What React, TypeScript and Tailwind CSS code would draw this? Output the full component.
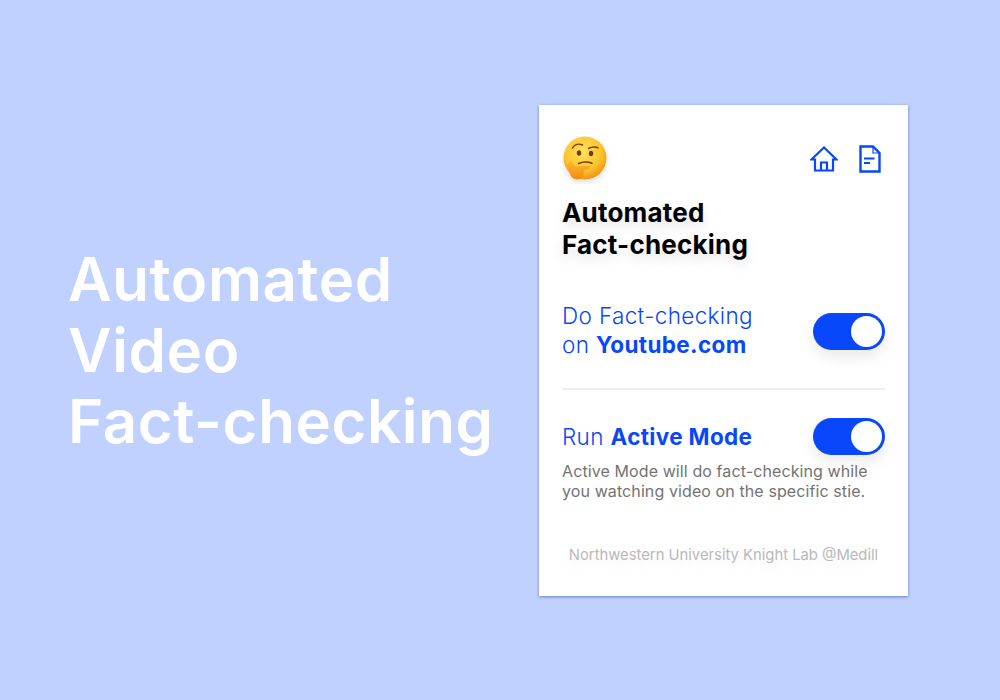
import React from "react";

const BLUE = "#0847fb";

function ThinkingEmoji() {
  return (
    <svg width="50" height="50" viewBox="0 0 50 50" className="block">
      <defs>
        <radialGradient id="face" cx="45%" cy="35%" r="70%">
          <stop offset="0%" stopColor="#ffe25a" />
          <stop offset="60%" stopColor="#fdc52f" />
          <stop offset="100%" stopColor="#ee8a10" />
        </radialGradient>
        <linearGradient id="hand" x1="0" y1="0" x2="0" y2="1">
          <stop offset="0%" stopColor="#ffb52e" />
          <stop offset="100%" stopColor="#f58a12" />
        </linearGradient>
        <filter id="soft" x="-30%" y="-30%" width="160%" height="160%">
          <feDropShadow dx="0" dy="3" stdDeviation="3" floodColor="#000" floodOpacity="0.12" />
        </filter>
      </defs>
      <g filter="url(#soft)">
        <circle cx="23" cy="24" r="21.500" fill="url(#face)" />
        <path d="M10.500 14c2-3.500 6-4.700 10-3" fill="none" stroke="#7a3b0a" strokeWidth="1.500" strokeLinecap="round" />
        <path d="M26.500 14.500c3-1.500 6.500-1.800 9.500-.8" fill="none" stroke="#7a3b0a" strokeWidth="1.500" strokeLinecap="round" />
        <ellipse cx="17" cy="19" rx="2.200" ry="2.700" fill="#6b3a10" />
        <ellipse cx="29" cy="19.500" rx="2.200" ry="2.700" fill="#6b3a10" />
        <path d="M16.500 29.500c4-1.800 9-2 13.500-.3" fill="none" stroke="#7a3b0a" strokeWidth="1.600" strokeLinecap="round" />
        <path d="M7 28.500c-1.500 0-2.300 1.300-1.700 3l2.500 8c1.200 3.700 3.500 6 7 6 3 0 5-1.300 6-3.500 1-1.800 1-3.700.5-5.500l5.200-1.500c2-.5 2.500-2.700.5-3.200l-10 .8c-2 .2-3.200-.3-4.500-1.200L10 28C9 27.500 8 28.300 7 28.500z" fill="url(#hand)" />
      </g>
    </svg>
  );
}

function HomeIcon() {
  return (
    <svg width="28" height="26" viewBox="0 0 28 26" fill="none" stroke={BLUE} strokeWidth="2.200" className="block">
      <path d="M1.500 13.500 14 1.500l12.500 12H23v11H5v-11H1.500z" strokeLinejoin="miter" />
      <path d="M11 24.500v-8h6v8" />
    </svg>
  );
}

function DocIcon() {
  return (
    <svg width="22" height="28" viewBox="0 0 22 28" fill="none" stroke={BLUE} strokeWidth="2.400" className="block">
      <path d="M1.500 1.500h12.500l6.500 6.500v18.500H1.500V1.500z" />
      <path d="M14 1.500v6.500h6.500" strokeWidth="1.200" />
      <path d="M5 13.500h10.500M5 18h6" strokeWidth="1.800" />
    </svg>
  );
}

function Toggle() {
  return (
    <div className="flex h-[37px] w-[72px] shrink-0 items-center justify-end rounded-full bg-[#0847fb] pr-[3px] shadow-[0_8px_14px_rgba(0,0,0,0.08)]">
      <div className="h-[31px] w-[31px] rounded-full bg-white" />
    </div>
  );
}

export default function App() {
  return (
    <div className="flex h-[700px] w-[1000px] items-start overflow-hidden bg-[#c0d1ff] font-['Inter',sans-serif]">
      <h1 className="mt-[244px] ml-[68px] w-[471px] shrink-0 text-[60px] leading-[71px] font-semibold tracking-[0.6px] text-white">
        Automated
        <br />
        Video
        <br />
        Fact-checking
      </h1>
      <div className="mt-[105px] flex h-[491px] w-[369px] shrink-0 flex-col bg-white px-[23px] shadow-[0_1px_3px_rgba(40,60,140,0.55)]">
        <div className="mt-[29px] flex h-[50px] items-center justify-between">
          <ThinkingEmoji />
          <div className="mr-[4px] flex items-center gap-[21px]">
            <HomeIcon />
            <DocIcon />
          </div>
        </div>
        <h2 className="mt-[13px] text-[26px] leading-[32px] font-bold tracking-[0.2px] text-black [text-shadow:0_6px_12px_rgba(0,0,0,0.12)]">
          Automated
          <br />
          Fact-checking
        </h2>
        <div className="mt-[40px] flex items-center justify-between">
          <p className="pb-[2px] text-[22.5px] leading-[29px] font-light tracking-[0.35px] text-[#0847fb]">
            Do Fact-checking
            <br />
            on <b className="font-bold">Youtube.com</b>
          </p>
          <Toggle />
        </div>
        <div className="mt-[27px] h-[2px] bg-[#eeeeee]" />
        <div className="mt-[28px] flex items-center justify-between">
          <p className="text-[22.5px] leading-[37px] font-light tracking-[0.35px] text-[#0847fb]">
            Run <b className="font-bold">Active Mode</b>
          </p>
          <Toggle />
        </div>
        <p className="mt-[6px] text-[16px] leading-[20px] tracking-[0.1px] text-[#737373]">
          Active Mode will do fact-checking while
          <br />
          you watching video on the specific stie.
        </p>
        <p className="mt-[44px] text-center text-[14.800px] leading-[20px] text-[#b9b9b9] [text-shadow:0_6px_12px_rgba(0,0,0,0.08)]">
          Northwestern University Knight Lab @Medill
        </p>
      </div>
    </div>
  );
}
